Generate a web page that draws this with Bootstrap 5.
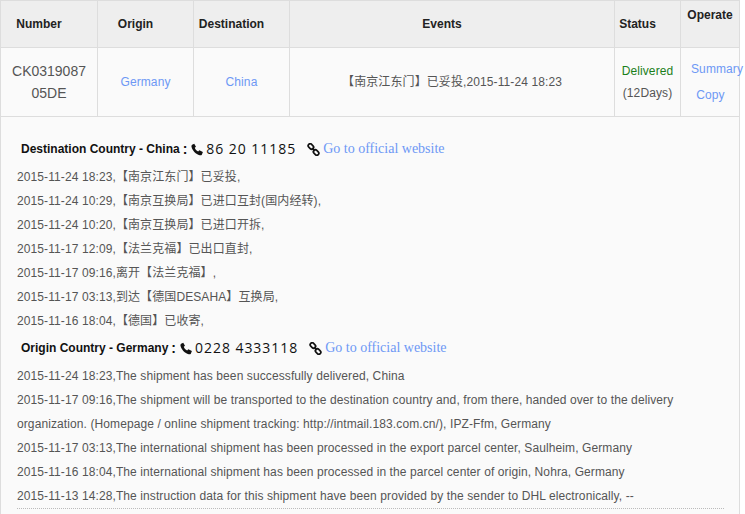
<!DOCTYPE html>
<html lang="en">
<head>
<meta charset="utf-8">
<title>Tracking</title>
<link href="https://cdn.jsdelivr.net/npm/bootstrap@5.3.0/dist/css/bootstrap.min.css" rel="stylesheet">
<style>
html,body{margin:0;height:514px;overflow:hidden;background:#fff}
body{font-family:"Liberation Sans","Noto Sans CJK SC",sans-serif;font-size:12px;color:#555}
.track-wrap{width:740px}
.track-tbl{width:739px;table-layout:fixed;border-collapse:collapse;margin:0;background:#fafafa}
.track-tbl th,.track-tbl td{border:1px solid #ddd;padding:0;text-align:center;vertical-align:middle;background:#fafafa;color:#555;box-shadow:none;overflow:visible;letter-spacing:.1px}
.track-tbl th{background:#eee;color:#222;font-weight:700;height:47px;padding-right:20px;letter-spacing:0}
.track-tbl .row-main td{height:69px;line-height:22px}
.track-tbl .col-num{font-size:14px;padding:0 8px;word-break:break-all;letter-spacing:0}
.tr-link,.tr-link:hover{color:#6d98f5;text-decoration:none}
.track-tbl th.th-up{vertical-align:top;padding:5px 0 0 0}
.ok{color:#1a7f1a}
.track-tbl td.op-cell{white-space:nowrap}
.op-a{display:block;padding-left:10px;margin-top:-1px}
.op-b{display:block;margin-top:4px;padding-left:1px}
.track-tbl td.detail{padding:20px 16px 6px 16px;text-align:left;line-height:24px}
.cty{display:flex;align-items:center;color:#111;font-weight:700;padding-left:4px;height:24px;letter-spacing:0}
.cty-b{margin-top:3px;margin-bottom:4px}
.phone{font-weight:400;font-family:"Open Sans",sans-serif;font-size:14px;letter-spacing:.95px;color:#111;margin-left:2px;white-space:nowrap}
.cty svg{flex:none}
.colon{font-size:14px;margin:0 4px 0 3px}
.site{font-family:"Liberation Serif",serif;font-weight:400;font-size:14px;margin-left:3px}
.lk-ic{margin-left:11px}
.evt{margin:0;height:24px;white-space:nowrap}
.evt-wrap{margin:0;line-height:24px}
.dots{border-bottom:1px dotted #bbb;height:0;width:707px}
</style>
</head>
<body>
<div class="track-wrap">
<table class="table track-tbl">
<colgroup><col style="width:97px"><col style="width:96px"><col style="width:96px"><col style="width:325px"><col style="width:66px"><col style="width:59px"></colgroup>
<thead>
<tr>
<th>Number</th>
<th>Origin</th>
<th>Destination</th>
<th>Events</th>
<th>Status</th>
<th class="th-up">Operate</th>
</tr>
</thead>
<tbody>
<tr class="row-main">
<td class="col-num">CK0319087 05DE</td>
<td><a class="tr-link" href="#">Germany</a></td>
<td><a class="tr-link" href="#">China</a></td>
<td>【南京江东门】已妥投,2015-11-24 18:23</td>
<td><span class="ok">Delivered</span><br>(12Days)</td>
<td class="op-cell"><a class="tr-link op-a" href="#">Summary</a><a class="tr-link op-b" href="#">Copy</a></td>
</tr>
<tr>
<td colspan="6" class="detail">
<div class="cty">Destination Country - China<span class="colon">:</span>
<svg width="13" height="13" viewBox="0 0 12 12"><path d="M1 1.6 3 .6l1.6 2.8-1.1 1c.5 1.500 1.600 2.700 3.100 3.400l1.100-1.100L11 8.400 10 10.800C9.600 11.400 8.800 11.500 8 11.300 4.500 10.200 1.500 7.300.5 3.600.3 2.800.5 2 1 1.600z" fill="#111"/></svg>
<span class="phone">86 20 11185</span>
<svg class="lk-ic" width="13" height="13" viewBox="0 0 13 13" fill="none" stroke="#111" stroke-width="1.700"><rect x=".9" y="1.500" width="6" height="4" rx="2" transform="rotate(45 3.900 3.500)"/><rect x="6.100" y="7.500" width="6" height="4" rx="2" transform="rotate(45 9.100 9.500)"/><path d="M5 5l3 3"/></svg>
<a class="tr-link site" href="#">Go to official website</a></div>
<div class="evt mt-1">2015-11-24 18:23,【南京江东门】已妥投,</div>
<div class="evt">2015-11-24 10:29,【南京互换局】已进口互封(国内经转),</div>
<div class="evt">2015-11-24 10:20,【南京互换局】已进口开拆,</div>
<div class="evt">2015-11-17 12:09,【法兰克福】已出口直封,</div>
<div class="evt">2015-11-17 09:16,离开【法兰克福】,</div>
<div class="evt">2015-11-17 03:13,到达【德国DESAHA】互换局,</div>
<div class="evt">2015-11-16 18:04,【德国】已收寄,</div>
<div class="cty cty-b">Origin Country - Germany<span class="colon">:</span>
<svg width="13" height="13" viewBox="0 0 12 12"><path d="M1 1.6 3 .6l1.6 2.8-1.1 1c.5 1.500 1.600 2.700 3.100 3.400l1.100-1.100L11 8.400 10 10.800C9.600 11.400 8.800 11.500 8 11.300 4.500 10.200 1.500 7.300.5 3.600.3 2.800.5 2 1 1.600z" fill="#111"/></svg>
<span class="phone">0228 4333118</span>
<svg class="lk-ic" width="13" height="13" viewBox="0 0 13 13" fill="none" stroke="#111" stroke-width="1.700"><rect x=".9" y="1.500" width="6" height="4" rx="2" transform="rotate(45 3.900 3.500)"/><rect x="6.100" y="7.500" width="6" height="4" rx="2" transform="rotate(45 9.100 9.500)"/><path d="M5 5l3 3"/></svg>
<a class="tr-link site" href="#">Go to official website</a></div>
<div class="evt">2015-11-24 18:23,The shipment has been successfully delivered, China</div>
<div class="evt-wrap">2015-11-17 09:16,The shipment will be transported to the destination country and, from there, handed over to the delivery organization. (Homepage / online shipment tracking: http://intmail.183.com.cn/), IPZ-Ffm, Germany</div>
<div class="evt">2015-11-17 03:13,The international shipment has been processed in the export parcel center, Saulheim, Germany</div>
<div class="evt">2015-11-16 18:04,The international shipment has been processed in the parcel center of origin, Nohra, Germany</div>
<div class="evt">2015-11-13 14:28,The instruction data for this shipment have been provided by the sender to DHL electronically, --</div>
<div class="dots"></div>
</td>
</tr>
</tbody>
</table>
</div>
<script src="https://cdn.jsdelivr.net/npm/bootstrap@5.3.0/dist/js/bootstrap.bundle.min.js"></script>
</body>
</html>
